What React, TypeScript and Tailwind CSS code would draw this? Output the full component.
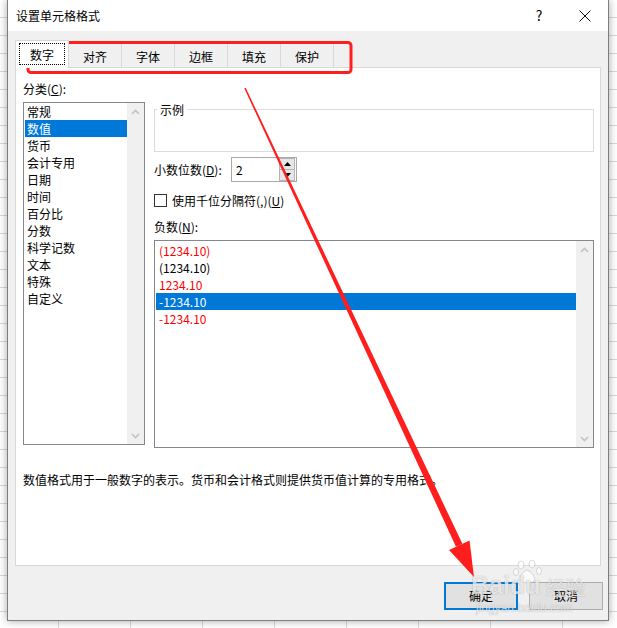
import React from 'react';

const categories = ['常规', '数值', '货币', '会计专用', '日期', '时间', '百分比', '分数', '科学记数', '文本', '特殊', '自定义'];

const negatives = [
  { text: '(1234.10)', color: 'text-[#ff0000]' },
  { text: '(1234.10)', color: 'text-black' },
  { text: '1234.10', color: 'text-[#ff0000]' },
  { text: '-1234.10', color: 'text-white', selected: true },
  { text: '-1234.10', color: 'text-[#ff0000]' },
];

const tabs = ['对齐', '字体', '边框', '填充', '保护'];

const Chevron = ({ down }: { down?: boolean }) => (
  <svg width="9" height="6" viewBox="0 0 9 6" className={down ? 'rotate-180' : ''}>
    <path d="M1 5 L4.5 1.5 L8 5" fill="none" stroke="#c2c2c2" strokeWidth="1.6" />
  </svg>
);

const ScrollBar = () => (
  <div className="w-[17px] bg-[#f0f0f0] flex flex-col justify-between">
    <div className="h-[17px] flex items-center justify-center"><Chevron /></div>
    <div className="h-[17px] flex items-center justify-center"><Chevron down /></div>
  </div>
);

const App = () => {
  return (
    <div className="relative w-[617px] h-[628px] overflow-hidden bg-white bg-[image:repeating-linear-gradient(to_bottom,transparent_0,transparent_17px,#d9d9d9_17px,#d9d9d9_18px),repeating-linear-gradient(to_right,transparent_0,transparent_58px,#d9d9d9_58px,#d9d9d9_59px,transparent_59px,transparent_72px)] font-['Noto_Sans_CJK_SC',sans-serif] text-[12px] text-black">
      <div className="relative ml-[7px] w-[602px] h-[621px] flex flex-col bg-[#f0f0f0] border border-t-0 border-[#7f7f7f] shadow-[0_0_8px_rgba(0,0,0,0.35)]">
        {/* title bar */}
        <div className="h-[31px] bg-white flex items-center justify-between pl-[8px]">
          <span className="leading-[17px]">设置单元格格式</span>
          <div className="flex h-full">
            <div className="w-[46px] flex items-center justify-center text-[14px]">?</div>
            <div className="w-[46px] flex items-center justify-center">
              <svg width="12" height="12" viewBox="0 0 12 12">
                <path d="M0.5 0.5 L11.5 11.5 M11.5 0.5 L0.5 11.5" stroke="#111" strokeWidth="1" />
              </svg>
            </div>
          </div>
        </div>

        <div className="flex-1 flex flex-col pl-[7px] pr-[7px] pt-[9px]">
          {/* tabs */}
          <div className="flex items-end h-[28px] -mb-px">
            <div className="relative z-10 w-[54px] h-[28px] bg-white border-x border-t border-[#d9d9d9] flex px-[3px] pt-[2px] pb-[3px]">
              <div className="flex-1 border border-dotted border-black flex items-center justify-center leading-[17px]">数字</div>
            </div>
            {tabs.map((t) => (
              <div key={t} className="w-[53px] h-[25px] border-t border-r border-[#d9d9d9] bg-[#f0f0f0] flex items-center justify-center leading-[17px]">
                {t}
              </div>
            ))}
          </div>

          {/* panel */}
          <div className="h-[499px] bg-white border border-[#d9d9d9] pl-[7px] pt-[12px]">
            <div className="leading-[17px] mb-[4px]">分类(<span className="underline">C</span>):</div>
            <div className="flex items-start">
              <div className="mt-[1px] w-[122px] h-[343px] border border-[#828790] flex">
                <div className="flex-1 pl-[1px]">
                  {categories.map((c, i) => (
                    <div key={c} className={`h-[17px] leading-[17px] pl-[2px] ${i === 1 ? 'bg-[#0078d7] text-white' : ''}`}>{c}</div>
                  ))}
                </div>
                <ScrollBar />
              </div>

              <div className="ml-[9px] w-[440px] flex flex-col">
                <fieldset className="h-[51px] border border-[#dcdcdc]">
                  <legend className="ml-[2px] px-[3px] leading-[17px]">示例</legend>
                </fieldset>

                <div className="mt-[5px] h-[25px] flex items-center">
                  <span className="w-[77px] leading-[17px]">小数位数(<span className="underline">D</span>):</span>
                  <div className="w-[66px] h-[25px] border border-[#a9a9a9] flex">
                    <span className="flex-1 pl-[4px] leading-[23px]">2</span>
                    <div className="w-[16px] mr-[1px] flex flex-col">
                      <div className="h-[12px] border border-[#b4b4b4] bg-[#e6e6e6] flex items-center justify-center">
                        <svg width="7" height="4" viewBox="0 0 7 4"><path d="M0 4 L3.5 0 L7 4 Z" fill="#000" /></svg>
                      </div>
                      <div className="h-[11px] border border-t-0 border-[#b4b4b4] bg-[#e6e6e6] flex items-center justify-center">
                        <svg width="7" height="4" viewBox="0 0 7 4"><path d="M0 0 L3.5 4 L7 0 Z" fill="#000" /></svg>
                      </div>
                    </div>
                  </div>
                </div>

                <div className="mt-[10px] h-[17px] flex items-center">
                  <div className="w-[13px] h-[13px] border border-[#333] bg-white" />
                  <span className="ml-[5px] leading-[17px]">使用千位分隔符(,)(<span className="underline">U</span>)</span>
                </div>

                <div className="mt-[9px] leading-[17px]">负数(<span className="underline">N</span>):</div>
                <div className="mt-[5px] w-[440px] h-[208px] border border-[#828790] flex">
                  <div className="flex-1 pl-[1px] pt-[1px]">
                    {negatives.map((n, i) => (
                      <div key={i} className={`h-[17px] leading-[17px] pl-[3px] ${n.color} ${n.selected ? 'bg-[#0078d7]' : ''}`}>{n.text}</div>
                    ))}
                  </div>
                  <ScrollBar />
                </div>
              </div>
            </div>
            <div className="mt-[23px] leading-[17px]">数值格式用于一般数字的表示。货币和会计格式则提供货币值计算的专用格式。</div>
          </div>

          {/* buttons */}
          <div className="mt-[16px] -mr-[2px] flex justify-end gap-[11px]">
            <button className="w-[74px] h-[28px] border-2 border-[#0078d7] bg-[#e1e1e1]">确定</button>
            <button className="w-[74px] h-[28px] border border-[#adadad] bg-[#e1e1e1]">取消</button>
          </div>
        </div>
      </div>

      {/* watermark */}
      <svg className="absolute left-[512px] top-[560px] pointer-events-none opacity-70" width="32" height="24" viewBox="0 0 32 24">
        <g fill="#ffffff" stroke="#bdbdbd" strokeWidth="0.8">
          <ellipse cx="9" cy="5" rx="3" ry="4" />
          <ellipse cx="20" cy="4" rx="3" ry="4" />
          <ellipse cx="4" cy="12" rx="2.5" ry="3.5" />
          <ellipse cx="27" cy="11" rx="2.5" ry="3.5" />
          <path d="M15 10 C 9 12, 6 20, 10 22 C 13 23, 18 23, 21 22 C 25 20, 21 12, 15 10 Z" />
        </g>
      </svg>
      <div className="absolute left-[471px] top-[573px] flex flex-col items-start text-white/75 [text-shadow:0_0_1px_rgba(0,0,0,0.35)] pointer-events-none">
        <div className="flex items-end gap-[1px] leading-none">
          <span className="text-[25px] font-bold font-['Liberation_Sans',sans-serif]">Baidu</span>
          <span className="ml-[4px] text-[20px]">经验</span>
        </div>
        <span className="mt-[4px] ml-[5px] text-[12px] leading-none font-['Liberation_Sans',sans-serif]">jingyan.baidu.com</span>
      </div>

      {/* annotations */}
      <svg className="absolute inset-0 pointer-events-none" width="617" height="628" viewBox="0 0 617 628">
        <rect x="28" y="42.5" width="323" height="30" rx="3" fill="none" stroke="#ff1e1e" strokeWidth="3" />
        <polygon points="244.3,88.3 245.7,87.7 462.4,543.8 456,546.8" fill="#ff1e1e" />
        <polygon points="449,550 474,577 469.5,540.5" fill="#ff1e1e" />
      </svg>
    </div>
  );
};

export default App;
